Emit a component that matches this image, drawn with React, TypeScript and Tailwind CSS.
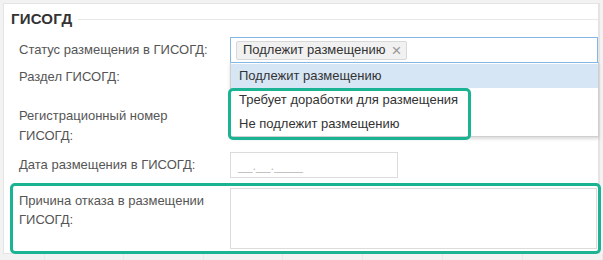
import React from "react";

export default function App() {
  const cells = [45, 79, 80, 79, 80, 80, 80, 80];
  return (
    <div
      className="relative w-[603px] h-[260px] overflow-hidden bg-[#f2f2f2]"
      style={{ fontFamily: '"Liberation Sans", Arial, sans-serif' }}
    >
      <div className="flex">
        <div className="ml-[3px] mt-[3px] w-[596px] h-[251px] bg-white border border-[#e4e4e4] flex flex-col">
          {/* header */}
          <div className="flex items-center pt-[6px] pl-[7px]">
            <span className="text-[15px] leading-[17px] font-bold text-[#333] tracking-[0.2px]">ГИСОГД</span>
            <div className="flex-1 h-px bg-[#e8e8e8] ml-[6px] mt-[1px]" />
          </div>

          {/* row 1 */}
          <div className="flex items-center mt-[10px]">
            <div className="w-[226px] pl-[15px] text-[13px] text-[#555]">Статус размещения в ГИСОГД:</div>
            <div className="flex-1 h-[26px] border border-[#86b7e3] flex items-center pl-[5px]">
              <div className="h-[19px] flex items-center pl-[6px] pr-[5px] bg-[#f1f1f1] border border-[#d8d8d8] rounded-[2px] text-[13px] text-[#333]">
                Подлежит размещению
                <span className="ml-[6px] text-[#999] text-[17px] leading-none">×</span>
              </div>
            </div>
          </div>

          {/* row 2 */}
          <div className="flex items-center mt-[1px]">
            <div className="w-[226px] pl-[15px] text-[13px] text-[#555]">Раздел ГИСОГД:</div>
            <div className="flex-1 h-[26px] border border-[#ddd]" />
          </div>

          {/* row 3 */}
          <div className="flex mt-[13px]">
            <div className="w-[226px] pl-[15px] pt-[3px] text-[13px] leading-[20px] text-[#555]">
              Регистрационный номер
              <br />
              ГИСОГД:
            </div>
            <div className="flex-1 h-[26px] border border-[#ddd]" />
          </div>

          {/* row 4 */}
          <div className="flex items-center mt-[6px]">
            <div className="w-[226px] pl-[15px] text-[13px] text-[#555]">Дата размещения в ГИСОГД:</div>
            <div className="w-[168px] h-[26px] border border-[#dcdcdc] flex items-end pl-[7px] pb-[3px] text-[13px] leading-[16px] text-[#bbb]">
              __.__.____
            </div>
          </div>

          {/* row 5 */}
          <div className="flex mt-[10px]">
            <div className="w-[226px] pl-[15px] pt-[3px] text-[13px] leading-[19px] text-[#555]">
              Причина отказа в размещении
              <br />
              ГИСОГД:
            </div>
            <div className="flex-1 mr-[1px] h-[61px] border border-[#dcdcdc]" />
          </div>
        </div>
        <div className="flex-1 mt-[3px] border-l border-[#e4e4e4]" />
      </div>

      {/* bottom strip */}
      <div className="flex h-[6px]">
        {cells.map((w, i) => (
          <div key={i} style={{ width: w }} className="border-r border-[#e8e8e8]" />
        ))}
      </div>

      {/* dropdown */}
      <div className="absolute left-[230px] top-[62px] w-[369px] h-[75px] bg-white border border-[#cfcfcf] border-t-[#86b7e3] shadow-[0_2px_3px_rgba(0,0,0,0.15)] text-[13px] text-[#333]">
        <div className="h-[24px] mt-[1px] bg-[#d6e6f5] flex items-center pl-[8px]">Подлежит размещению</div>
        <div className="h-[24px] flex items-center pl-[8px]">Требует доработки для размещения</div>
        <div className="h-[24px] flex items-center pl-[8px]">Не подлежит размещению</div>
      </div>

      {/* annotations */}
      <div className="absolute left-[228px] top-[88px] w-[243px] h-[52px] border-[3px] border-[#1ab394] rounded-[5px]" />
      <div className="absolute left-[10px] top-[183px] w-[591px] h-[71px] border-[3px] border-[#1ab394] rounded-[5px]" />
    </div>
  );
}
